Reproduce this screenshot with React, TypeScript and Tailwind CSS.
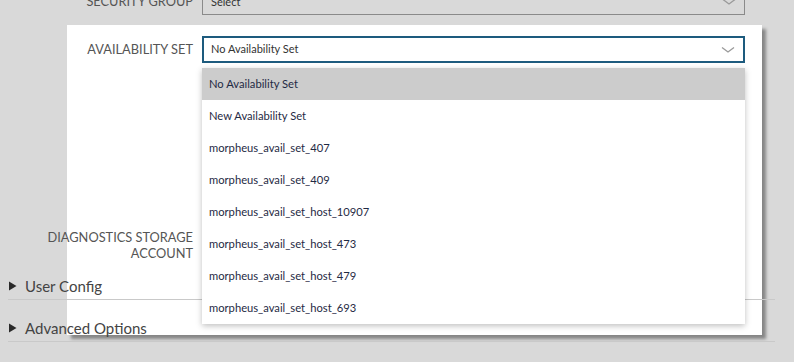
import React from 'react'

const options = [
  'No Availability Set',
  'New Availability Set',
  'morpheus_avail_set_407',
  'morpheus_avail_set_409',
  'morpheus_avail_set_host_10907',
  'morpheus_avail_set_host_473',
  'morpheus_avail_set_host_479',
  'morpheus_avail_set_host_693',
]

const Chevron: React.FC = () => (
  <svg width="14" height="8" viewBox="0 0 14 8" fill="none" stroke="#9a9a9a" strokeWidth="1.3">
    <path d="M1 1.5l6 4.5 6-4.5" />
  </svg>
)

const Section: React.FC<{ title: string }> = ({ title }) => (
  <div className="ml-2 w-[767px] h-[42px] flex items-end pb-[2px] border-b border-[#c9c9c9]">
    <svg width="8" height="10" viewBox="0 0 8 10" className="ml-px mr-[8px] mb-[6px]">
      <path d="M0 0.5L7.5 5L0 9.5z" fill="#2a2a2a" />
    </svg>
    <span className="text-[15px] text-[#444]">{title}</span>
  </div>
)

export default function App() {
  return (
    <div className="relative w-[794px] h-[362px] overflow-hidden bg-[#d9d9d9] font-['Lato',sans-serif]">
      {/* highlighted panel */}
      <div className="absolute left-[67px] top-[25px] w-[695px] h-[310px] bg-white shadow-[4px_4px_3px_rgba(0,0,0,0.38)]" />

      <div className="relative flex flex-col">
        {/* security group */}
        <div className="flex items-center mt-[-11px]">
          <div className="w-[193px] text-right text-[12.8px] text-[#555] uppercase">Security Group</div>
          <div className="ml-[9px] w-[543px] h-[26px] border border-[#8a8a8a] flex items-center justify-between pl-2 pr-2">
            <span className="text-[11px] text-[#333]">Select</span>
            <Chevron />
          </div>
        </div>

        {/* availability set */}
        <div className="flex items-center mt-[21px]">
          <div className="w-[193px] text-right text-[12.8px] text-[#555] uppercase">Availability Set</div>
          <div className="ml-[9px] w-[543px] h-[27px] border-2 border-[#1d5b7e] bg-white flex items-center justify-between pl-[7px] pr-2">
            <span className="text-[11px] text-[#333]">No Availability Set</span>
            <Chevron />
          </div>
        </div>

        {/* diagnostics */}
        <div className="mt-[166px] w-[193px] text-right text-[12.8px] leading-[16px] text-[#555] uppercase">
          Diagnostics Storage
          <br />
          Account
        </div>

        <div className="mt-[-3px]">
          <Section title="User Config" />
          <Section title="Advanced Options" />
        </div>

        {/* dropdown menu */}
        <div className="absolute left-[202px] top-[68px] w-[543px] bg-white shadow-[0_2px_6px_rgba(0,0,0,0.25)]">
          {options.map((o, i) => (
            <div
              key={o}
              className={
                'h-8 flex items-center pl-[7px] text-[11.2px] text-[#1f2a44] ' + (i === 0 ? 'bg-[#cccccc]' : '')
              }
            >
              {o}
            </div>
          ))}
        </div>
      </div>
    </div>
  )
}
